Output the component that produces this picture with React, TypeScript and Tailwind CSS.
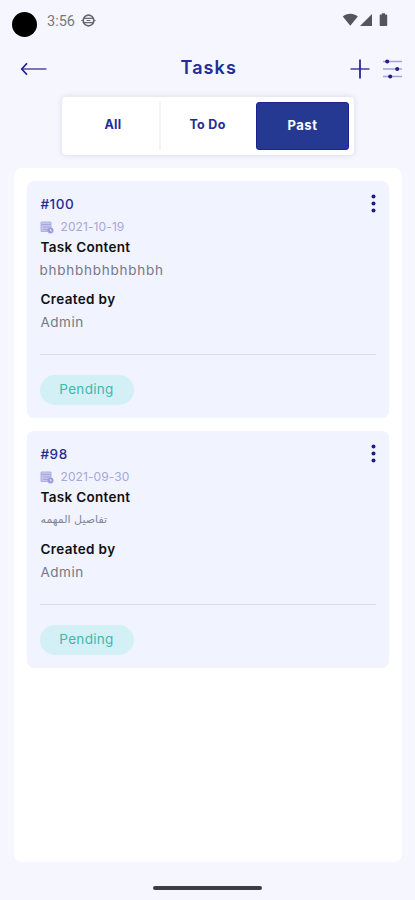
import React from "react";

const tasks = [
  { id: "#100", date: "2021-10-19", content: "bhbhbhbhbhbhbh", author: "Admin", arabic: false },
  { id: "#98", date: "2021-09-30", content: "تفاصيل المهمه", author: "Admin", arabic: true },
];

const StatusBar = () => {
  return (
    <div className="flex h-10 items-center justify-between pl-3 pr-[27px]">
      <div className="flex items-center">
        <div className="mt-[9px] h-[25px] w-[25px] rounded-full bg-black"></div>
        <span className="ml-[10px] mt-[3px] w-[28px] whitespace-nowrap font-[Roboto,sans-serif] text-[14.5px] leading-4 text-[#77787c]">
          3:56
        </span>
        <svg className="ml-[6px] h-[15px] w-[15px]" viewBox="0 0 15 15" fill="none" stroke="#67686c">
          <circle cx="7.5" cy="7.5" r="5.3" strokeWidth="1.7" />
          <path d="M2.2 5.3h10.6M2.2 9.7h10.6" strokeWidth="1.3" />
          <path d="M.4 7.5h1.8M12.8 7.5h1.8M5.5 7.5h4" strokeWidth="1.2" />
        </svg>
      </div>
      <svg className="h-[14px] w-[46px]" viewBox="0 0 46 14" fill="#555659">
        <path d="M.8 3.4C4.9-.1 11.5-.1 15.8 3.4L8.3 12.8z" />
        <path d="M30 1v12H18z" />
        <path d="M38.4 1.6h1.5V.3H43v1.3h1.5q.7 0 .7.7v10q0 .7-.7.7h-6.1q-.7 0-.7-.7v-10q0-.7.7-.7z" />
      </svg>
    </div>
  );
};

const Header = () => {
  return (
    <header className="flex h-[57px] items-center justify-between pl-5 pr-3">
      <button className="w-[62px]">
        <svg className="h-[14px] w-[27px]" viewBox="0 0 27 14" fill="none">
          <path d="M1.5 7H26.5" stroke="#6d69b5" strokeWidth="1.8" />
          <path d="M7 1.2L1.8 7L7 12.8" stroke="#251f8e" strokeWidth="1.7" />
        </svg>
      </button>
      <h1 className="-mt-[3px] ml-[17px] w-[56px] whitespace-nowrap text-[18px] font-semibold tracking-[1.1px] text-[#252c94]">
        Tasks
      </h1>
      <div className="flex w-[85px] items-center justify-end gap-[13px]">
        <svg className="h-5 w-5" viewBox="0 0 20 20" fill="none">
          <path d="M.5 10h19" stroke="#5853a8" strokeWidth="1.7" />
          <path d="M10 .5v19" stroke="#211b91" strokeWidth="1.7" />
        </svg>
        <svg className="h-5 w-5" viewBox="0 0 20 20" fill="none">
          <path d="M0 2.5h19M0 10h19M0 17.5h19" stroke="#a4a3d4" strokeWidth="1.4" />
          <g fill="#211b91">
            <circle cx="4.2" cy="2.5" r="2" />
            <circle cx="14.2" cy="10" r="2" />
            <circle cx="7.2" cy="17.5" r="2" />
          </g>
        </svg>
      </div>
    </header>
  );
};

const Tabs = () => {
  return (
    <div className="ml-[62px] flex h-[58px] w-[292px] rounded-[4px] bg-white px-[5px] py-[5px] text-[12.5px] font-bold text-[#252c94] shadow-[0_0_5px_1px_rgba(70,70,90,0.12)]">
      <button className="w-[94px] border-r-2 border-[#f3f3f7] pb-[1px] tracking-[0.3px]">All</button>
      <button className="w-[95px] pb-[1px] pr-[2px] tracking-[0.3px]">To Do</button>
      <button className="w-[93px] rounded-[3px] border border-[#1c2296] bg-[#253993] pb-[1px] text-[13px] tracking-[0.5px] text-white">
        Past
      </button>
    </div>
  );
};

const CalendarIcon = () => {
  return (
    <svg className="mt-[1px] h-[13px] w-[14px]" viewBox="0 0 14 13" fill="none">
      <path d="M1 1h10v9.5H1z" fill="#c5c6ed" stroke="#b0b1e2" strokeWidth="1" />
      <path d="M1 3.5h10M3 6h7M3 8.5h5" stroke="#a5a6de" strokeWidth="1" />
      <circle cx="10.5" cy="9.5" r="3" fill="#9c9dda" />
      <path d="M10.5 8v1.8h1.3" stroke="#eff1fe" strokeWidth=".8" />
    </svg>
  );
};

const TaskCard = ({ task }: { task: (typeof tasks)[number] }) => {
  return (
    <article className="h-[237px] rounded-[7px] bg-[#f1f3ff] px-[13px] pt-[13px]">
      <div className="flex h-5 items-start justify-between">
        <span className="pl-[1px] text-[13.5px] font-medium leading-5 tracking-[0.5px] text-[#252c94]">{task.id}</span>
        <button>
          <svg className="h-5 w-[5px]" viewBox="0 0 5 20" fill="#211b80">
            <circle cx="2.5" cy="2.5" r="2" />
            <circle cx="2.5" cy="9.5" r="2" />
            <circle cx="2.5" cy="16.5" r="2" />
          </svg>
        </button>
      </div>
      <div className="mt-[2px] flex h-[21px] items-center gap-[7px]">
        <CalendarIcon />
        <span className="text-[12px] tracking-[0.1px] text-[#a6a7da]">{task.date}</span>
      </div>
      <h2 className="pl-[1px] text-[13.5px] font-semibold leading-[21px] tracking-[0.3px] text-[#101014]">
        Task Content
      </h2>
      {task.arabic ? (
        <p className="mt-[2px] h-5 pl-[1px] font-['DejaVu_Sans',sans-serif] text-[11px] leading-5 text-[#858694]">
          {task.content}
        </p>
      ) : (
        <p className="mt-[2px] h-5 text-[13.5px] leading-5 tracking-[0.75px] text-[#777885]">{task.content}</p>
      )}
      <h2 className="mt-[9px] pl-[1px] text-[13.5px] font-semibold leading-[21px] tracking-[0.35px] text-[#101014]">
        Created by
      </h2>
      <p className="mt-[2px] pl-[1px] text-[13.5px] leading-5 tracking-[0.5px] text-[#777885]">{task.author}</p>
      <div className="mt-[22px] h-px bg-[#dadeeb]"></div>
      <div className="mt-5 flex h-[30px] w-[94px] items-center justify-center rounded-full bg-[#d3f0f6] pb-[2px] text-[13.5px] tracking-[0.3px] text-[#3cb8b0]">
        Pending
      </div>
    </article>
  );
};

const App = () => {
  return (
    <main className="flex h-[900px] w-[415px] flex-col overflow-hidden bg-[#f5f6ff] font-[Inter,sans-serif]">
      <StatusBar />
      <Header />
      <Tabs />
      <section className="mx-[13.5px] mt-[13px] flex h-[694px] flex-col gap-[13.4px] rounded-[8px] bg-white p-[13px]">
        {tasks.map((task) => (
          <TaskCard key={task.id} task={task} />
        ))}
      </section>
      <div className="mx-auto mt-6 h-[4px] w-[109px] rounded-full bg-[#3a3d42]"></div>
    </main>
  );
};

export default App;
